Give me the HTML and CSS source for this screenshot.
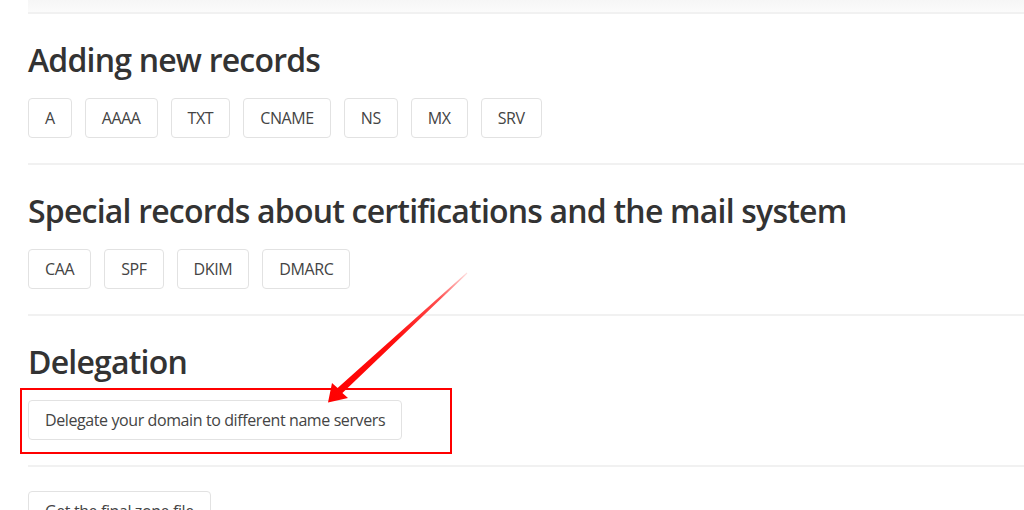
FILE: index.html
```html
<!DOCTYPE html>
<html>
<head>
<meta charset="utf-8">
<link rel="stylesheet" href="styles.css">
</head>
<body>
<div class="page">
  <div class="top-fade"></div>
  <section class="section">
    <h2 class="title">Adding new records</h2>
    <div class="btns">
      <button class="btn">A</button>
      <button class="btn">AAAA</button>
      <button class="btn">TXT</button>
      <button class="btn">CNAME</button>
      <button class="btn">NS</button>
      <button class="btn">MX</button>
      <button class="btn">SRV</button>
    </div>
  </section>
  <section class="section">
    <h2 class="title">Special records about certifications and the mail system</h2>
    <div class="btns">
      <button class="btn">CAA</button>
      <button class="btn">SPF</button>
      <button class="btn">DKIM</button>
      <button class="btn">DMARC</button>
    </div>
  </section>
  <section class="section">
    <h2 class="title">Delegation</h2>
    <div class="btns annotated">
      <button class="btn">Delegate your domain to different name servers</button>
      <div class="highlight"></div>
    </div>
  </section>
  <section class="section section-plain">
    <div class="btns">
      <button class="btn">Get the final zone file</button>
    </div>
  </section>
  <svg class="arrow" width="1024" height="510" viewBox="0 0 1024 510">
    <defs>
      <linearGradient id="ag" x1="467" y1="273" x2="328" y2="402" gradientUnits="userSpaceOnUse">
        <stop offset="0" stop-color="#ffe0e0"/>
        <stop offset="0.2" stop-color="#ff5050"/>
        <stop offset="0.5" stop-color="#ff1010"/>
        <stop offset="1" stop-color="#ff0000"/>
      </linearGradient>
    </defs>
    <path d="M466.7,272.6 L467.4,273.4 L342.4,393.1 L348,398 L328,402.5 L332,383 L337.6,387.9 Z" fill="url(#ag)"/>
  </svg>
</div>
</body>
</html>
```

FILE: styles.css
```css
html, body {
  margin: 0;
  padding: 0;
  background: #fff;
}
body {
  font-family: "Open Sans", "Noto Sans", sans-serif;
  color: #333;
  overflow: hidden;
  height: 510px;
}
.page {
  position: relative;
  padding-left: 28px;
  padding-top: 12px;
}
.top-fade {
  position: absolute;
  left: 28px;
  right: 0;
  top: 0;
  height: 12px;
  background: linear-gradient(#f6f6f6, #fbfbfb);
}
.section {
  border-top: 2px solid #f1f1f1;
  padding: 27px 0 25px;
}
.section-plain {
  padding-top: 24px;
}
.title {
  margin: 0 0 19px;
  font-size: 32px;
  line-height: 38px;
  font-weight: 600;
  letter-spacing: -0.8px;
  color: #333;
}
.btns {
  display: flex;
  gap: 13px;
}
.btn {
  font-family: inherit;
  font-size: 16px;
  line-height: 24px;
  letter-spacing: -0.4px;
  padding: 7px 16px;
  border: 1px solid #e2e2e2;
  border-radius: 4px;
  background: #fff;
  color: #444;
}
.annotated {
  position: relative;
}
.highlight {
  position: absolute;
  left: -8px;
  top: -12px;
  width: 432px;
  height: 66px;
  box-sizing: border-box;
  border: 2px solid #ff0000;
}
.arrow {
  position: absolute;
  left: 0;
  top: 0;
  pointer-events: none;
}
```
